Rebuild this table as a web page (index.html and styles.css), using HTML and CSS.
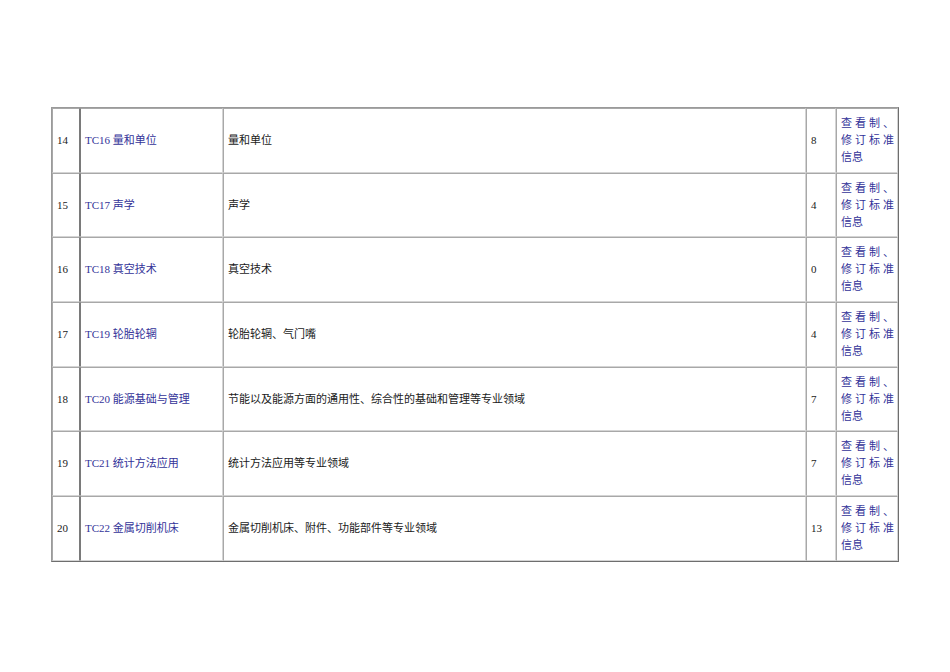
FILE: index.html
```html
<!DOCTYPE html>
<html lang="zh-CN">
<head>
<meta charset="utf-8">
<title>标准化技术委员会</title>
<link rel="stylesheet" href="styles.css">
</head>
<body>
<div class="page">
<table class="tc">
  <colgroup>
    <col class="c-no"><col class="c-name"><col class="c-scope"><col class="c-count"><col class="c-link">
  </colgroup>
  <tbody>
    <tr><td>14</td><td><a href="#">TC16 量和单位</a></td><td>量和单位</td><td>8</td><td class="act"><a href="#">查看制、修订标准信息</a></td></tr>
    <tr><td>15</td><td><a href="#">TC17 声学</a></td><td>声学</td><td>4</td><td class="act"><a href="#">查看制、修订标准信息</a></td></tr>
    <tr><td>16</td><td><a href="#">TC18 真空技术</a></td><td>真空技术</td><td>0</td><td class="act"><a href="#">查看制、修订标准信息</a></td></tr>
    <tr><td>17</td><td><a href="#">TC19 轮胎轮辋</a></td><td>轮胎轮辋、气门嘴</td><td>4</td><td class="act"><a href="#">查看制、修订标准信息</a></td></tr>
    <tr><td>18</td><td><a href="#">TC20 能源基础与管理</a></td><td>节能以及能源方面的通用性、综合性的基础和管理等专业领域</td><td>7</td><td class="act"><a href="#">查看制、修订标准信息</a></td></tr>
    <tr><td>19</td><td><a href="#">TC21 统计方法应用</a></td><td>统计方法应用等专业领域</td><td>7</td><td class="act"><a href="#">查看制、修订标准信息</a></td></tr>
    <tr><td>20</td><td><a href="#">TC22 金属切削机床</a></td><td>金属切削机床、附件、功能部件等专业领域</td><td>13</td><td class="act"><a href="#">查看制、修订标准信息</a></td></tr>
  </tbody>
</table>
</div>
</body>
</html>
```

FILE: styles.css
```css
html, body {
  margin: 0;
  padding: 0;
  background: #ffffff;
}
.page {
  padding: 107px 0 0 51px;
}
.tc {
  width: 846px;
  table-layout: fixed;
  border-collapse: separate;
  border-spacing: 0;
  border-top: 1px solid #9a9a9a;
  border-left: 1px solid #9a9a9a;
  border-right: 1px solid #6e6e6e;
  border-bottom: 1px solid #6e6e6e;
  font-family: "Liberation Serif", "Noto Sans CJK SC", serif;
  font-size: 11px;
  color: #1a1a1a;
}
.c-no { width: 28px; }
.c-name { width: 143px; }
.c-scope { width: 583px; }
.c-count { width: 30px; }
.c-link { width: 62px; }
.tc td {
  padding: 6px 4px 5.7px 4px;
  vertical-align: middle;
  line-height: 17px;
  border-top: 1px solid #a8a8a8;
  border-left: 1px solid #a8a8a8;
  border-bottom: 1px solid #d4d4d4;
  border-right: 1px solid #d4d4d4;
}
.tc td:first-child {
  border-right-color: #7a7a7a;
}
.tc td:nth-child(2) {
  border-left-color: #7a7a7a;
}
.tc a {
  color: #333399;
  text-decoration: none;
}
.tc td.act {
  text-align: justify;
  text-justify: inter-character;
  padding-left: 4px;
  padding-right: 3px;
}
```
